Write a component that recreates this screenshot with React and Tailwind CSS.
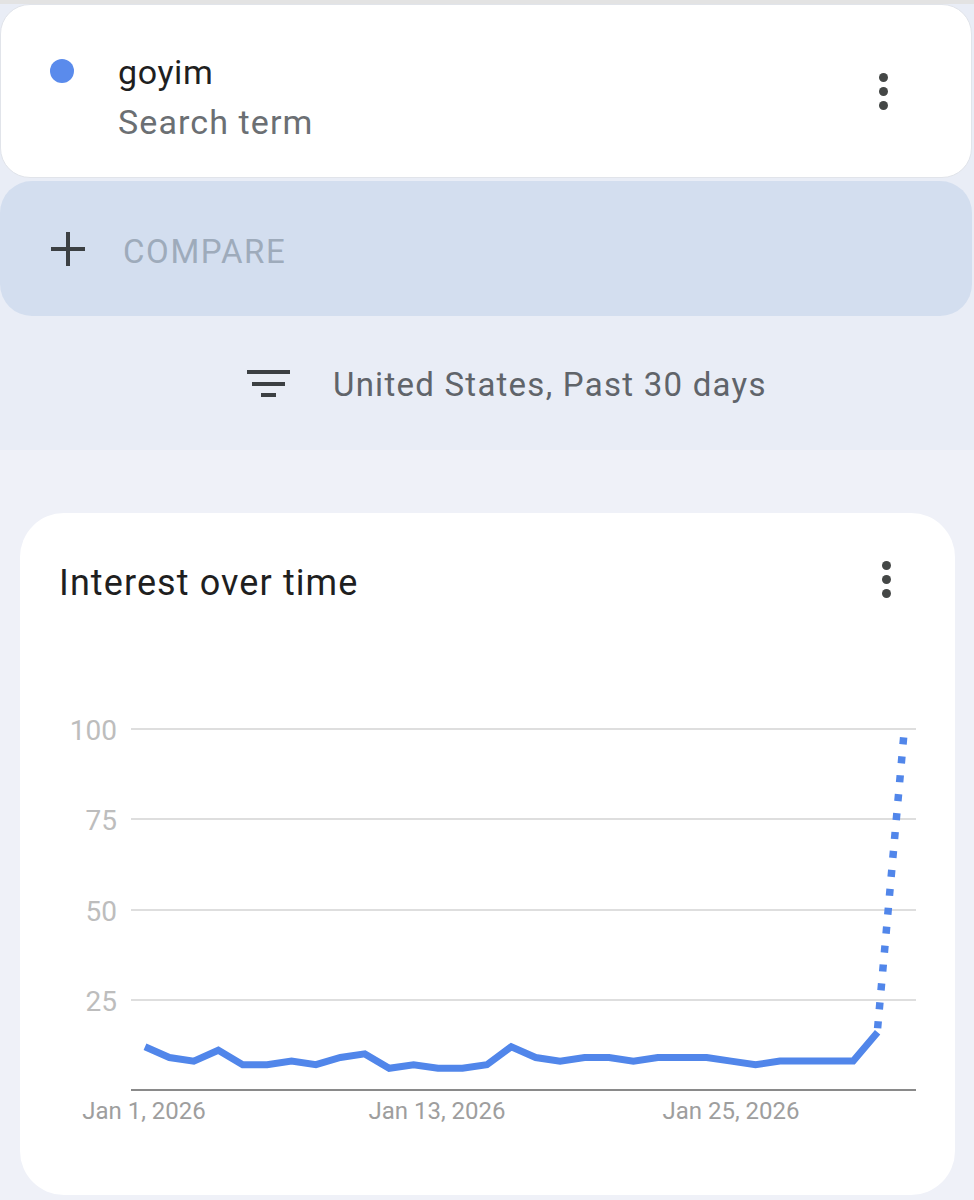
import React from 'react';

const values = [12, 9, 8, 11, 7, 7, 8, 7, 9, 10, 6, 7, 6, 6, 7, 12, 9, 8, 9, 9, 8, 9, 9, 9, 8, 7, 8, 8, 8, 8, 16];

const px = (i) => 125 + i * 24.42;
const py = (v) => 377 - v * 3.61;

const MoreDots = () => (
  <div className="flex flex-col gap-[5px]">
    <span className="block w-[9px] h-[9px] rounded-full bg-[#444746]" />
    <span className="block w-[9px] h-[9px] rounded-full bg-[#444746]" />
    <span className="block w-[9px] h-[9px] rounded-full bg-[#444746]" />
  </div>
);

const Chart = () => {
  const solid = values.map((v, i) => `${px(i).toFixed(1)},${py(v).toFixed(1)}`).join(' ');
  const last = values.length - 1;
  const grid = [
    { label: '100', y: 16 },
    { label: '75', y: 106 },
    { label: '50', y: 197 },
    { label: '25', y: 287 },
  ];
  return (
    <svg width="935" height="440" viewBox="0 0 935 440" className="block">
      {grid.map((g) => (
        <g key={g.label}>
          <line x1="111" x2="896" y1={g.y} y2={g.y} stroke="#dedede" strokeWidth="2" />
          <text x="97" y={g.y + 11} textAnchor="end" fontSize="28" fill="#bdbdbd" fontFamily="Roboto, sans-serif">
            {g.label}
          </text>
        </g>
      ))}
      <line x1="111" x2="896" y1="377" y2="377" stroke="#8a8a8a" strokeWidth="2" />
      <polyline points={solid} fill="none" stroke="#5186ea" strokeWidth="7" strokeLinejoin="miter" />
      <line
        x1={px(last)}
        y1={py(16) - 4}
        x2={px(last + 1) + 2}
        y2={py(100) + 4}
        stroke="#5186ea"
        strokeWidth="7.5"
        strokeDasharray="7 12"
      />
      {[
        { t: 'Jan 1, 2026', x: 124 },
        { t: 'Jan 13, 2026', x: 417 },
        { t: 'Jan 25, 2026', x: 711 },
      ].map((d) => (
        <text key={d.t} x={d.x} y="406" textAnchor="middle" fontSize="24" fill="#9e9e9e" fontFamily="Roboto, sans-serif">
          {d.t}
        </text>
      ))}
    </svg>
  );
};

export default function App() {
  return (
    <div className="w-[974px] h-[1200px] overflow-hidden bg-[#eff1f8] flex flex-col font-['Roboto',sans-serif]">
      <div className="h-[4px] bg-[#e3e3e3]" />

      <div className="bg-[#e9edf6] flex flex-col">
        {/* search term card */}
        <div className="h-[174px] mr-[2px] bg-white rounded-[30px] border border-[#e1e4ea] flex items-start pl-[49px] pr-[83px]">
          <span className="block w-6 h-6 rounded-full bg-[#5a8bec] mt-[54px] shrink-0" />
          <div className="ml-[44px] pt-[42px] flex flex-col">
            <span className="text-[34px] leading-[50px] text-[#1f1f1f] tracking-[0.6px]">goyim</span>
            <span className="text-[34px] leading-[50px] text-[#6b6f73] tracking-[1.1px]">Search term</span>
          </div>
          <div className="ml-auto mt-[68px]">
            <MoreDots />
          </div>
        </div>

        {/* compare */}
        <div className="mt-[3px] h-[135px] mr-[2px] bg-[#d3deef] rounded-[32px] flex items-center pl-[51px]">
          <svg width="34" height="34" viewBox="0 0 34 34">
            <path d="M17 0v34M0 17h34" stroke="#3c4043" strokeWidth="4" />
          </svg>
          <span className="ml-[38px] mt-[6px] text-[33px] text-[#9eabbb] tracking-[1.6px]">COMPARE</span>
        </div>

        {/* filter row */}
        <div className="h-[134px] flex items-center pl-[247px]">
          <svg width="43" height="30" viewBox="0 0 43 30">
            <rect x="0" y="2" width="43" height="4" fill="#3c4043" />
            <rect x="5" y="14" width="33" height="4" fill="#3c4043" />
            <rect x="14" y="25" width="15" height="4" fill="#3c4043" />
          </svg>
          <span className="ml-[43px] mt-[3px] text-[33px] text-[#60646a] tracking-[1.25px]">United States, Past 30 days</span>
        </div>
      </div>

      {/* interest over time */}
      <div className="mt-[63px] ml-[20px] w-[935px] h-[682px] bg-white rounded-[44px] flex flex-col">
        <div className="h-[200px] flex items-start pl-[39px] pr-[64px] pt-[48px]">
          <span className="text-[36px] leading-[44px] text-[#1f1f1f] tracking-[1.1px]">Interest over time</span>
          <div className="ml-auto">
            <MoreDots />
          </div>
        </div>
        <Chart />
      </div>
    </div>
  );
}
